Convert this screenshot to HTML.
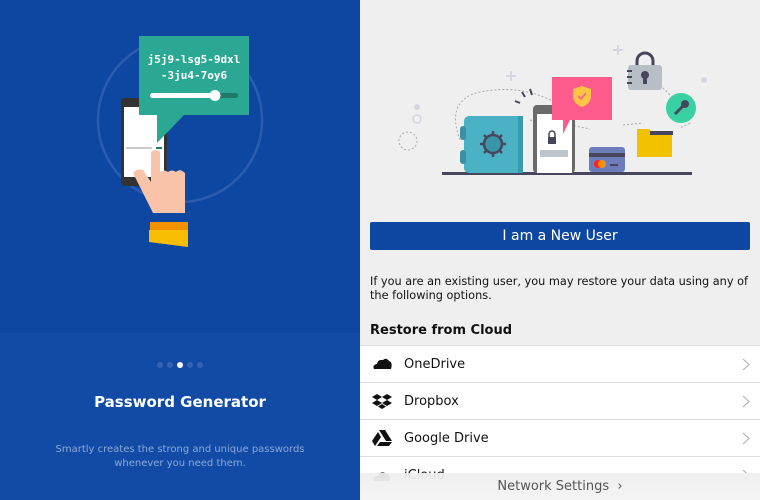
<!DOCTYPE html>
<html><head><meta charset="utf-8"><style>
*{margin:0;padding:0;box-sizing:border-box}
body{width:760px;height:500px;overflow:hidden;font-family:"DejaVu Sans","Liberation Sans",sans-serif;position:relative;background:#efefef}
#left{position:absolute;left:0;top:0;width:360px;height:500px;background:#114ba5}
#lt{position:absolute;left:0;top:0;width:360px;height:333px;background:#0e47a1}
.dots{position:absolute;top:362px;left:157px;display:flex;gap:4px}
.dots i{display:block;width:6px;height:6px;border-radius:3px;background:#3563b3}
.dots i.a{background:#fff}
h1{position:absolute;top:393px;left:0;width:360px;text-align:center;color:#fff;font-size:15px;font-weight:bold}
.sub{position:absolute;top:443px;left:0;width:360px;text-align:center;color:#8ba8d8;font-size:10px;line-height:13.5px}
#right{position:absolute;left:360px;top:0;width:400px;height:500px}
.btn{position:absolute;left:10px;top:222px;width:380px;height:28px;background:#0e47a1;border-radius:2px;color:#fff;font-size:14px;text-align:center;line-height:28px}
.para{position:absolute;left:10px;top:275px;width:385px;font-size:11.3px;line-height:14px;color:#111}
.hd{position:absolute;left:10px;top:323px;font-size:13px;font-weight:bold;color:#111}
.list{position:absolute;left:0;top:345px;width:400px;background:#fff;border-top:1px solid #ddd}
.row{height:37px;border-bottom:1px solid #ddd;position:relative;font-size:13px;color:#111;line-height:37px;padding-left:44px}
.row svg.ic{position:absolute;left:12px;top:10px}
.row .ch{position:absolute;right:10px;top:12px}
.foot{position:absolute;left:0;top:473px;width:400px;height:27px;background:linear-gradient(#eeeeeeee,#f4f4f4);text-align:center;font-size:13px;color:#555;line-height:27px}
</style></head><body>
<div id="left"><div id="lt"></div>
<svg width="360" height="333" style="position:absolute;left:0;top:0">
<circle cx="180" cy="120" r="82" fill="none" stroke="#2c5cb0" stroke-width="2.5"/>
<rect x="121" y="98" width="46" height="88" rx="4" fill="#333"/>
<rect x="124" y="107" width="40" height="70" fill="#fff"/>
<rect x="126" y="147" width="26" height="2" fill="#ccc"/>
<rect x="156" y="147" width="6" height="2" fill="#1b7b66"/>
<path d="M151 152 q5-4 9 0 v20 q4-3 8 0 q4-3 8 0 q4-4 9 1 v40 h-32 l-20-40 q4-5 10-3 l8 12z" fill="#f8c3a8"/>
<rect x="150" y="222" width="38" height="8" fill="#f29200"/>
<path d="M149 230 h39 v17 l-39-5z" fill="#f7bd00"/>
<path d="M139 36 h110 v79 h-65 l-27 28 v-28 h-18z" fill="#2aa893"/>
<text x="194" y="63" text-anchor="middle" fill="#fff" font-family="DejaVu Sans Mono,monospace" font-size="11" font-weight="bold">j5j9-lsg5-9dxl</text>
<text x="194" y="79" text-anchor="middle" fill="#fff" font-family="DejaVu Sans Mono,monospace" font-size="11" font-weight="bold">-3ju4-7oy6</text>
<rect x="150" y="93" width="88" height="5" rx="2.5" fill="#207a68"/>
<rect x="150" y="93" width="65" height="5" rx="2.5" fill="#fff"/>
<circle cx="215" cy="95.5" r="5.5" fill="#fff"/>
</svg>
<div class="dots"><i></i><i></i><i class="a"></i><i></i><i></i></div>
<h1>Password Generator</h1>
<div class="sub">Smartly creates the strong and unique passwords<br>whenever you need them.</div>
</div>
<div id="right">
<svg width="400" height="200" style="position:absolute;left:0;top:0">
<g fill="none" stroke="#aaa" stroke-width="1" stroke-dasharray="2 2">
<path d="M100 140 q-15-40 20-48 q50-10 90 20"/>
<circle cx="48" cy="141" r="9"/>
<path d="M170 120 l20 5"/><path d="M210 125 l20 4"/><path d="M263 125 l20 -2"/><path d="M300 85 l12 12"/><path d="M330 123 l-10 5"/>
</g>
<g fill="#d6d6e2"><rect x="150" y="71" width="2" height="10"/><rect x="146" y="75" width="10" height="2"/><rect x="257" y="45" width="2" height="10"/><rect x="253" y="49" width="10" height="2"/><circle cx="57" cy="107" r="3"/><circle cx="344" cy="80" r="3"/></g>
<g fill="none" stroke="#d6d6e2" stroke-width="1.5"><circle cx="57" cy="119" r="4"/><circle cx="293" cy="151" r="3"/></g>
<rect x="82" y="172" width="250" height="3" fill="#47465c"/>
<rect x="104" y="116" width="59" height="57" rx="5" fill="#4bb1c4"/>
<rect x="158" y="116" width="5" height="57" fill="#3a9aad"/>
<rect x="100" y="126" width="6" height="14" rx="3" fill="#3a8fa2"/><rect x="100" y="150" width="6" height="14" rx="3" fill="#3a8fa2"/>
<circle cx="133" cy="144" r="9" fill="#3a95a8" stroke="#47465c" stroke-width="2.5"/>
<g stroke="#47465c" stroke-width="2.5"><path d="M133 131v4M133 153v4M120 144h4M142 144h4M124 135l3 3M139 150l3 3M142 135l-3 3M124 153l3-3"/></g>
<rect x="173" y="105" width="42" height="68" rx="4" fill="#6a6a6a"/>
<rect x="177" y="114" width="35" height="59" fill="#fff"/>
<rect x="180" y="150" width="28" height="7" fill="#bcc6cc"/>
<rect x="188" y="137" width="8" height="7" fill="#47465c"/><path d="M189 137v-3a3 3 0 0 1 6 0v3" stroke="#47465c" fill="none" stroke-width="1.5"/>
<path d="M165 97l-3-5M172 95l-2-6M160 103l-5-2" stroke="#47465c" stroke-width="2"/>
<path d="M192 77h60v43h-42l-7 14v-14h-11z" fill="#fc5b8c"/>
<path d="M222 86l-9 3v7c0 6 4 9 9 11c5-2 9-5 9-11v-7z" fill="#fcc445"/>
<path d="M218 96l3 3 5-6" stroke="#fc5b8c" stroke-width="1.5" fill="none"/>
<path d="M277 65v-4a8 8 0 0 1 16 0v4" stroke="#47465c" stroke-width="3" fill="none"/>
<rect x="268" y="65" width="34" height="25" rx="3" fill="#b8bec6"/>
<circle cx="285" cy="75" r="4" fill="#47465c"/><rect x="283" y="76" width="4" height="8" fill="#47465c"/>
<path d="M267 71h5M267 77h5M267 83h5" stroke="#47465c" stroke-width="2"/>
<circle cx="321" cy="108" r="15" fill="#3ad1a2"/>
<circle cx="325" cy="104" r="4" fill="#47465c"/><path d="M323 106l-8 8" stroke="#47465c" stroke-width="3"/>
<path d="M277 129h12l5 5h18v23h-35z" fill="#f2c200"/><rect x="290" y="131" width="23" height="4" fill="#47465c"/>
<rect x="229" y="147" width="36" height="25" rx="3" fill="#6d7dbb"/><rect x="229" y="153" width="36" height="4" fill="#47465c"/>
<circle cx="238" cy="164" r="4" fill="#f22"/><circle cx="242" cy="164" r="4" fill="#f90" opacity=".85"/><rect x="250" y="164" width="8" height="2" fill="#47465c"/>
</svg>
<div class="btn">I am a New User</div>
<div class="para">If you are an existing user, you may restore your data using any of the following options.</div>
<div class="hd">Restore from Cloud</div>
<div class="list">
<div class="row"><svg class="ic" width="20" height="16" viewBox="0 0 20 16"><path d="M2 13q-2-4 3-5q1-5 6-4q3-3 6 1q4 1 2 8z" fill="#111"/></svg>OneDrive<svg class="ch" width="8" height="13"><path d="M1 1l6 5.5-6 5.5" stroke="#aaa" fill="none"/></svg></div>
<div class="row"><svg class="ic" width="20" height="16" viewBox="0 0 20 16"><path d="M5 1l5 3-5 3-5-3zM15 1l5 3-5 3-5-3zM5 7l5 3-5 3-5-3zM15 7l5 3-5 3-5-3zM10 11l4 2.5-4 2.5-4-2.5z" fill="#111"/></svg>Dropbox<svg class="ch" width="8" height="13"><path d="M1 1l6 5.5-6 5.5" stroke="#aaa" fill="none"/></svg></div>
<div class="row"><svg class="ic" width="20" height="16" viewBox="0 0 20 16"><path d="M7 0h6l7 11h-6zM6 2l3 5-6 9-3-5zM8 12h12l-3 4h-12z" fill="#111"/></svg>Google Drive<svg class="ch" width="8" height="13"><path d="M1 1l6 5.5-6 5.5" stroke="#aaa" fill="none"/></svg></div>
<div class="row"><svg class="ic" width="20" height="16" viewBox="0 0 20 16"><path d="M2 14q-2-5 4-5q2-5 7-3q5 0 5 8z" fill="#111"/></svg>iCloud<svg class="ch" width="8" height="13"><path d="M1 1l6 5.5-6 5.5" stroke="#aaa" fill="none"/></svg></div>
</div>
<div class="foot">Network Settings &nbsp;›</div>
</div>
</body></html>
